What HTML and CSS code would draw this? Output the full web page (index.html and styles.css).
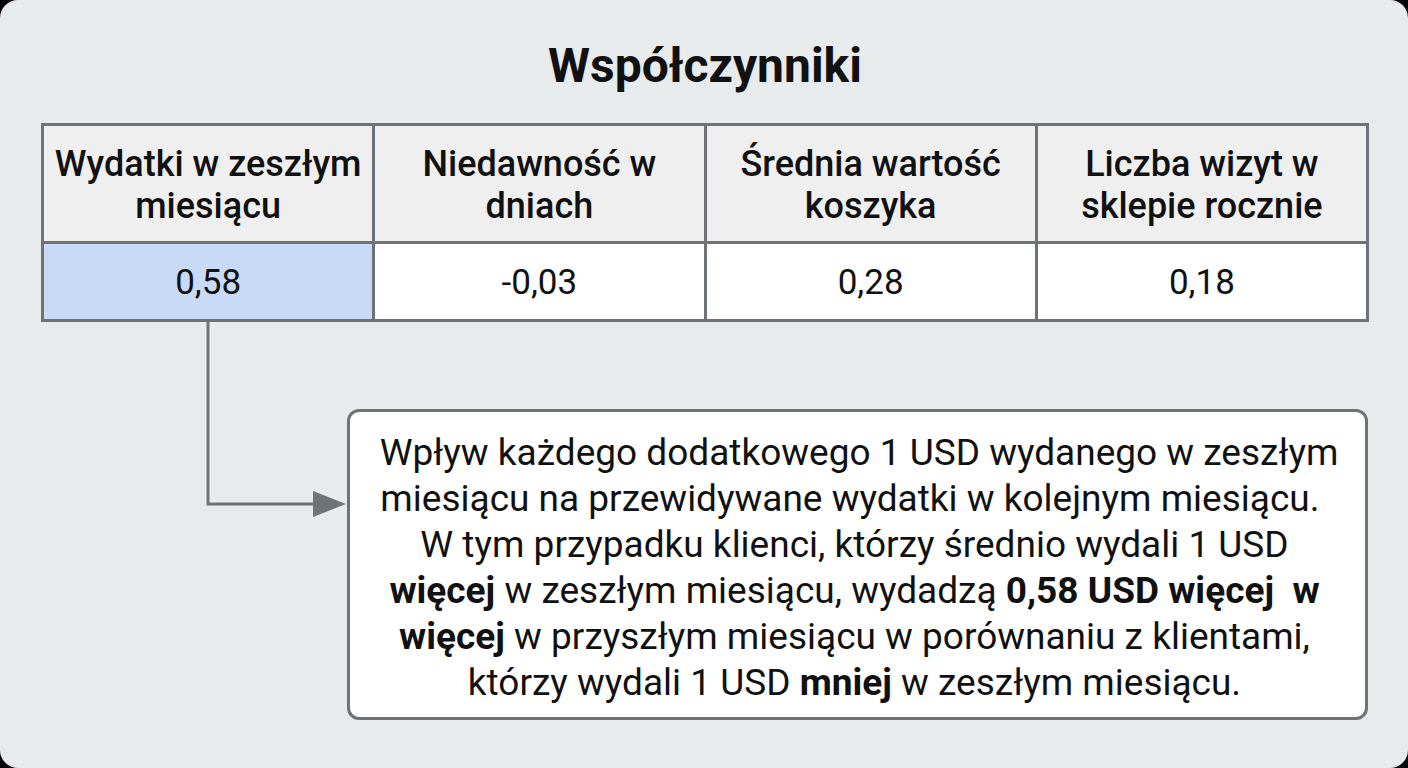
FILE: index.html
```html
<!DOCTYPE html>
<html lang="pl">
<head>
<meta charset="utf-8">
<title>Współczynniki</title>
<link rel="stylesheet" href="styles.css">
</head>
<body>
<div class="panel">
  <h1 class="title">Współczynniki</h1>
  <div class="table">
    <div class="cell head">Wydatki w zeszłym<br>miesiącu</div>
    <div class="cell head">Niedawność w<br>dniach</div>
    <div class="cell head">Średnia wartość<br>koszyka</div>
    <div class="cell head">Liczba wizyt w<br>sklepie rocznie</div>
    <div class="cell val hl">0,58</div>
    <div class="cell val">-0,03</div>
    <div class="cell val">0,28</div>
    <div class="cell val">0,18</div>
  </div>
  <div class="lower">
    <div class="connector">
      <svg width="306" height="200" viewBox="0 0 306 200">
        <polyline points="167,0 167,182 275,182" fill="none" stroke="#6e7378" stroke-width="3"/>
        <polygon points="272,169 305,182 272,195" fill="#6e7378"/>
      </svg>
    </div>
    <div class="callout">
      <p>&nbsp;Wpływ każdego dodatkowego 1 USD wydanego w zeszłym<br>miesiącu na przewidywane wydatki w kolejnym miesiącu.&nbsp;<br>W tym przypadku klienci, którzy średnio wydali 1 USD<br><b>więcej</b> w zeszłym miesiącu, wydadzą <b>0,58 USD więcej&nbsp; w</b><br><b>więcej</b> w przyszłym miesiącu w porównaniu z klientami,<br>którzy wydali 1 USD <b>mniej</b> w zeszłym miesiącu.</p>
    </div>
  </div>
</div>
</body>
</html>
```

FILE: styles.css
```css
html, body {
  margin: 0;
  padding: 0;
  background: #000;
}
body {
  width: 1408px;
  height: 768px;
  overflow: hidden;
  font-family: Roboto, "Liberation Sans", sans-serif;
  color: #111;
}
.panel {
  width: 1408px;
  height: 768px;
  box-sizing: border-box;
  background: #e8ebec;
  border-radius: 18px;
  padding: 0 39px 0 41px;
  display: flex;
  flex-direction: column;
}
.title {
  margin: 0;
  height: 123px;
  box-sizing: border-box;
  padding-top: 36px;
  text-align: center;
  font-size: 48px;
  font-weight: 700;
  line-height: 60px;
  color: #111;
}
.table {
  display: grid;
  grid-template-columns: repeat(4, 1fr);
  grid-template-rows: 115px 75px;
  border: 3px solid #6e7378;
  width: 1328px;
  box-sizing: border-box;
  background: #6e7378;
  gap: 3px;
}
.cell {
  display: flex;
  align-items: center;
  justify-content: center;
  text-align: center;
}
.head {
  background: #efefef;
  font-size: 36px;
  font-weight: 500;
  line-height: 42px;
  padding-top: 2px;
}
.val {
  background: #fff;
  font-size: 35px;
  font-weight: 400;
  line-height: 40px;
  padding-top: 2px;
}
.val.hl {
  background: #c8daf5;
}
.lower {
  display: flex;
  align-items: flex-start;
}
.connector {
  width: 306px;
  flex: none;
}
.connector svg {
  display: block;
}
.callout {
  margin-top: 87px;
  width: 1021px;
  height: 311px;
  box-sizing: border-box;
  background: #fff;
  border: 3px solid #6e7378;
  border-radius: 12px;
  display: flex;
  align-items: center;
  justify-content: center;
  text-align: center;
  padding-right: 6px;
}
.callout p {
  margin: 0;
  font-size: 37px;
  line-height: 46px;
  padding-top: 6px;
  white-space: nowrap;
}
.callout b {
  font-weight: 700;
}
```
